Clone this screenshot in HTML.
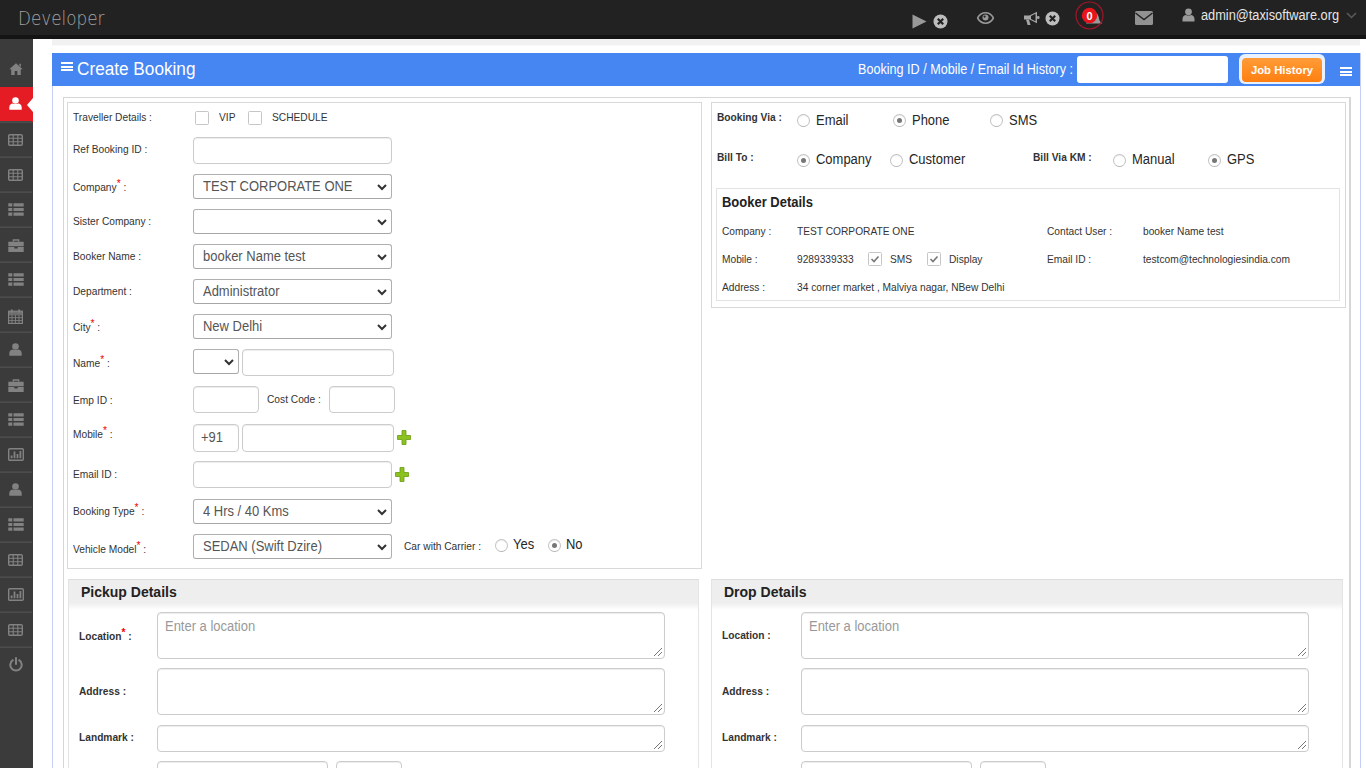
<!DOCTYPE html>
<html><head><meta charset="utf-8"><title>Create Booking</title>
<style>
*{box-sizing:border-box;margin:0;padding:0}
html,body{width:1366px;height:768px;overflow:hidden;background:#fff;font-family:"Liberation Sans",Arial,sans-serif;color:#333}
#top{position:absolute;left:0;top:0;width:1366px;height:39px;background:#222;border-bottom:4px solid #141414}
#top .brand{position:absolute;left:18px;top:6px;font-size:19px;line-height:24px;color:#a4a4a4;font-family:"DejaVu Sans","Liberation Sans",sans-serif;font-weight:200;transform:scaleX(.885);transform-origin:0 0;white-space:nowrap}
#top svg{position:absolute}
#top .mail{position:absolute;left:1201px;top:7px;font-size:14px;line-height:16px;color:#e6e6e6;white-space:nowrap;transform:scaleX(.913);transform-origin:0 0}
#side{position:absolute;left:0;top:39px;width:33px;height:729px;background:#3b3b3b}
#side .it{position:absolute;left:0;width:32px;height:35px;border-top:1px solid #4c4c4c;box-shadow:0 -1px 0 #464646}
#side .it.act{background:#e51c23;border:0;box-shadow:none;width:33px}
#side .it.act:after{content:"";position:absolute;right:0;top:10.500px;border-right:6px solid #fff;border-top:7px solid transparent;border-bottom:7px solid transparent}
#side .it svg{position:absolute}
#strip{position:absolute;left:52px;top:39px;width:1308px;height:7px;background:linear-gradient(#f1f1f1 0,#f1f1f1 6px,#f9f9f9 6px,#f9f9f9 7px)}
#panel{position:absolute;left:52px;top:53px;width:1309px;height:720px;border:1px solid #c5cff5}
#hdr{position:absolute;left:52px;top:53px;width:1308px;height:33px;background:#4586f3}
#hdr .title{position:absolute;left:25px;top:5px;font-size:18px;line-height:22px;color:#fff;white-space:nowrap;transform:scaleX(.955);transform-origin:0 0}
#hdr .hist{position:absolute;left:806px;top:8px;font-size:14px;line-height:16px;color:#fff;white-space:nowrap;transform:scaleX(.9);transform-origin:0 0}
#hdr .srch{position:absolute;left:1025px;top:3px;width:151px;height:27px;background:#fff;border-radius:3px}
#hdr .btn{position:absolute;left:1187px;top:1px;width:86px;height:30px;border-radius:6px;background:#e9f1ff;}
#hdr .btn i{position:absolute;left:3px;top:4px;width:80px;height:24px;border-radius:4px;background:linear-gradient(#ff9c38,#ff7f10);color:#fff;font-style:normal;font-weight:bold;font-size:11.300px;line-height:24px;text-align:center}
.bars{position:absolute;width:12px;height:9px;border-top:2px solid #fff;border-bottom:2px solid #fff}
.bars:after{content:"";position:absolute;left:0;top:1.5px;width:12px;height:2px;background:#fff}
.box{position:absolute;border:1px solid #d9d9d9;background:#fff}
.sbox{position:absolute;border:1px solid #e4e4e4;border-top-color:#dcdcdc;height:200px}
.lbl{position:absolute;font-size:11px;line-height:13px;color:#333;white-space:nowrap;transform:scaleX(.927);transform-origin:0 0}
.lbl b{font-weight:bold}
.req{color:#e00;font-size:11px;position:relative;top:-4px}
.inp{position:absolute;height:27px;border:1px solid #ccc;border-radius:4px;background:#fff;box-shadow:inset 0 1px 1px rgba(0,0,0,.075)}
.sel{position:absolute;height:25px;border:1px solid #b0b0b0;border-bottom-color:#a6a6a6;border-radius:3px;background:#fff;font-size:14px;color:#555;line-height:22px;padding-left:9px;white-space:nowrap}
.sel span{display:inline-block;transform:scaleX(.927);transform-origin:0 0}
.sel svg{position:absolute;right:3.500px;top:7px}
.t14{position:absolute;font-size:14px;line-height:16px;color:#262626;white-space:nowrap;transform:scaleX(.927);transform-origin:0 0}
.t10{position:absolute;font-size:11px;line-height:12px;color:#333;white-space:nowrap;transform:scaleX(.927);transform-origin:0 0}
.sx{display:inline-block;transform:scaleX(.927);transform-origin:0 0}
.radio{position:absolute;width:13px;height:13px;border:1px solid #c2c2c2;border-bottom-color:#b4b4b4;border-radius:50%;background:#fff;box-shadow:inset 0 1px 1px rgba(0,0,0,.06)}
.radio.on:after{content:"";position:absolute;left:3px;top:3px;width:5px;height:5px;border-radius:50%;background:#777}
.chk{position:absolute;width:14px;height:14px;border:1px solid #c6c6c6;border-radius:1.5px;background:#fff}
.ta{position:absolute;border:1px solid #ccc;border-radius:4px;background:#fff;box-shadow:inset 0 1px 1px rgba(0,0,0,.075)}
.ta .ph{position:absolute;left:7px;top:5px;font-size:14px;line-height:16px;color:#999;white-space:nowrap;transform:scaleX(.927);transform-origin:0 0}
.ta svg{position:absolute;right:1px;bottom:1px}
.sech{position:absolute;height:31px;border:1px solid #e4e4e4;border-top-color:#dcdcdc;border-bottom:0;background:linear-gradient(#eee 0,#eee 76%,#fff 100%);font-size:14px;font-weight:bold;color:#222;line-height:24px;padding-left:12px}
.sech span{display:inline-block}
</style></head><body>
<div id="top">
<div class="brand">Developer</div>
<!-- play -->
<svg style="left:912px;top:14px" width="15" height="15" viewBox="0 0 15 15"><path d="M0.5 0.5L14.5 7.5L0.5 14.5Z" fill="#999"/></svg>
<!-- times circle -->
<svg style="left:933px;top:14px" width="15" height="15" viewBox="0 0 15 15"><circle cx="7.5" cy="7.5" r="7" fill="#bdbdbd"/><path d="M4.8 4.8L10.2 10.2M10.2 4.8L4.8 10.2" stroke="#222" stroke-width="2.2"/></svg>
<!-- eye -->
<svg style="left:977px;top:12px" width="17" height="12" viewBox="0 0 17 12"><path d="M0.5 6C3 1.5 6 0.8 8.5 0.8S14 1.5 16.5 6C14 10.5 11 11.2 8.5 11.2S3 10.5 0.5 6Z" fill="none" stroke="#999" stroke-width="1.6"/><circle cx="8.5" cy="5.6" r="3" fill="#999"/><circle cx="7.6" cy="4.6" r="1.1" fill="#222"/></svg>
<!-- bullhorn -->
<svg style="left:1023px;top:11px" width="17" height="15" viewBox="0 0 17 15"><path d="M1 4.5h5.5L14 0.8v11.4L6.5 8.5H1Z" fill="#a5a5a5"/><path d="M3 8.5h3l1.5 5.5H4.6Z" fill="#a5a5a5"/><rect x="14" y="5" width="2.5" height="3" rx="1" fill="#a5a5a5"/><path d="M8 5L12.5 2.8V10.2L8 8Z" fill="#222"/></svg>
<svg style="left:1045px;top:11px" width="15" height="15" viewBox="0 0 15 15"><circle cx="7.5" cy="7.5" r="7" fill="#bdbdbd"/><path d="M4.8 4.8L10.2 10.2M10.2 4.8L4.8 10.2" stroke="#222" stroke-width="2.2"/></svg>
<!-- bell + badge -->
<svg style="left:1074px;top:0px" width="32" height="32" viewBox="0 0 32 32"><path d="M19 12c4 0 5.5 3 6 6.5c0.4 2.5 1.5 3.5 3.5 5H12Z" fill="#9a9a9a"/><circle cx="15.5" cy="15.5" r="13.5" fill="none" stroke="#a3152a" stroke-width="1.2"/><circle cx="15.5" cy="15.5" r="7.7" fill="#e8141c"/><text x="15.5" y="19.6" font-family="Liberation Sans, sans-serif" font-size="11" font-weight="bold" fill="#fff" text-anchor="middle">0</text></svg>
<!-- envelope -->
<svg style="left:1135px;top:11px" width="18" height="14" viewBox="0 0 18 14"><rect x="0" y="0" width="18" height="14" rx="1.6" fill="#929292"/><path d="M0.5 2L9 8.6L17.5 2" fill="none" stroke="#222" stroke-width="1.4"/></svg>
<!-- user -->
<svg style="left:1182px;top:8px" width="13" height="14" viewBox="0 0 13 14"><circle cx="6.5" cy="3.8" r="3.4" fill="#9a9a9a"/><path d="M0.5 13.5V11C0.5 8.3 2.5 7 4 7c1 .8 4 .8 5 0c1.500 0 3.500 1.300 3.500 4v2.500Z" fill="#9a9a9a"/></svg>
<div class="mail">admin@taxisoftware.org</div>
<svg style="left:1346px;top:12px" width="11" height="7" viewBox="0 0 11 7"><path d="M1 1L5.500 5.500L10 1" fill="none" stroke="#5a5a5a" stroke-width="1.5"/></svg>
</div>
<div id="side">
<div class="it" style="top:13px;border:0;box-shadow:none"><svg style="left:8.7px;top:10.7px" width="14" height="12" viewBox="0 0 14 12"><path d="M7 0.300L0.300 6.300h1.900V12h3.500V8h2.600v4h3.500V6.300h1.900Z" fill="#828282"/><path d="M10.300 0.800h1.600v3.200L10.300 2.500Z" fill="#828282"/></svg></div>
<div class="it act" style="top:48px"><svg style="left:9.2px;top:9.9px" width="13" height="13" viewBox="0 0 13 13"><circle cx="6.500" cy="3.500" r="3.300" fill="#fff"/><path d="M0.300 12.800V10.300C0.300 7.700 2.300 6.500 3.800 6.500c1 .8 4.400 .8 5.400 0c1.500 0 3.500 1.200 3.500 3.800v2.500Z" fill="#fff"/></svg></div>
<div class="it" style="top:83px"><svg style="left:8.2px;top:10.7px" width="15" height="12" viewBox="0 0 15 12"><rect x="0.700" y="0.700" width="13.600" height="10.600" rx="1.200" fill="none" stroke="#828282" stroke-width="1.400"/><path d="M1 4.300h13M1 7.700h13M5.200 1v10M9.800 1v10" stroke="#828282" stroke-width="1.100"/></svg></div>
<div class="it" style="top:118px"><svg style="left:8.2px;top:10.7px" width="15" height="12" viewBox="0 0 15 12"><rect x="0.700" y="0.700" width="13.600" height="10.600" rx="1.200" fill="none" stroke="#828282" stroke-width="1.400"/><path d="M1 4.300h13M1 7.700h13M5.200 1v10M9.800 1v10" stroke="#828282" stroke-width="1.100"/></svg></div>
<div class="it" style="top:153px"><svg style="left:7.7px;top:10.1px" width="16" height="13" viewBox="0 0 16 13"><path d="M0.300 0.300h4v3.200h-4ZM5.500 0.300h10.200v3.200H5.500ZM0.300 4.900h4v3.200h-4ZM5.500 4.900h10.200v3.200H5.500ZM0.300 9.500h4v3.200h-4ZM5.500 9.500h10.200v3.200H5.500Z" fill="#828282"/></svg></div>
<div class="it" style="top:188px"><svg style="left:7.7px;top:10.8px" width="16" height="13" viewBox="0 0 16 13"><path d="M5.300 2.800V1h5.400v1.800" fill="none" stroke="#828282" stroke-width="1.300"/><path d="M0.300 2.800h15.400v4.400H0.300ZM0.300 8.100h6v1.300h3.400V8.100h6V13H0.300Z" fill="#828282"/></svg></div>
<div class="it" style="top:223px"><svg style="left:7.7px;top:10.1px" width="16" height="13" viewBox="0 0 16 13"><path d="M0.300 0.300h4v3.200h-4ZM5.500 0.300h10.200v3.200H5.500ZM0.300 4.900h4v3.200h-4ZM5.500 4.900h10.200v3.200H5.500ZM0.300 9.500h4v3.200h-4ZM5.500 9.500h10.200v3.200H5.500Z" fill="#828282"/></svg></div>
<div class="it" style="top:258px"><svg style="left:8.2px;top:10.5px" width="15" height="15" viewBox="0 0 15 15"><rect x="0.600" y="2.200" width="13.800" height="12.200" fill="none" stroke="#828282" stroke-width="1.200"/><path d="M0.600 5.800h13.800M0.600 8.700h13.800M0.600 11.600h13.800M4 5.800v8.600M7.500 5.800v8.600M11 5.800v8.600" stroke="#828282" stroke-width="0.900"/><path d="M3.800 0.400v3.400M11.200 0.400v3.400" stroke="#828282" stroke-width="1.800"/><rect x="0.600" y="2.200" width="13.800" height="3" fill="#828282" opacity=".75"/></svg></div>
<div class="it" style="top:293px"><svg style="left:9.2px;top:9.9px" width="13" height="13" viewBox="0 0 13 13"><circle cx="6.500" cy="3.500" r="3.300" fill="#828282"/><path d="M0.300 12.800V10.300C0.300 7.700 2.300 6.500 3.800 6.500c1 .8 4.400 .8 5.400 0c1.500 0 3.500 1.200 3.500 3.800v2.500Z" fill="#828282"/></svg></div>
<div class="it" style="top:328px"><svg style="left:7.7px;top:10.8px" width="16" height="13" viewBox="0 0 16 13"><path d="M5.300 2.800V1h5.400v1.800" fill="none" stroke="#828282" stroke-width="1.300"/><path d="M0.300 2.800h15.400v4.400H0.300ZM0.300 8.100h6v1.300h3.400V8.100h6V13H0.300Z" fill="#828282"/></svg></div>
<div class="it" style="top:363px"><svg style="left:7.7px;top:10.1px" width="16" height="13" viewBox="0 0 16 13"><path d="M0.300 0.300h4v3.200h-4ZM5.500 0.300h10.200v3.200H5.500ZM0.300 4.900h4v3.200h-4ZM5.500 4.900h10.200v3.200H5.500ZM0.300 9.500h4v3.200h-4ZM5.500 9.500h10.200v3.200H5.500Z" fill="#828282"/></svg></div>
<div class="it" style="top:398px"><svg style="left:7.7px;top:10.2px" width="16" height="13" viewBox="0 0 16 13"><rect x="0.700" y="0.700" width="14.600" height="11.600" rx="1" fill="none" stroke="#828282" stroke-width="1.400"/><path d="M3.600 10.300V7.500M6.500 10.300V3.500M9.500 10.300V6M12.400 10.300V3" stroke="#828282" stroke-width="1.800"/></svg></div>
<div class="it" style="top:433px"><svg style="left:9.2px;top:9.9px" width="13" height="13" viewBox="0 0 13 13"><circle cx="6.500" cy="3.500" r="3.300" fill="#828282"/><path d="M0.300 12.800V10.300C0.300 7.700 2.300 6.500 3.800 6.500c1 .8 4.400 .8 5.400 0c1.500 0 3.500 1.200 3.500 3.800v2.500Z" fill="#828282"/></svg></div>
<div class="it" style="top:468px"><svg style="left:7.7px;top:10.1px" width="16" height="13" viewBox="0 0 16 13"><path d="M0.300 0.300h4v3.200h-4ZM5.500 0.300h10.200v3.200H5.500ZM0.300 4.900h4v3.200h-4ZM5.500 4.900h10.200v3.200H5.500ZM0.300 9.500h4v3.200h-4ZM5.500 9.500h10.200v3.200H5.500Z" fill="#828282"/></svg></div>
<div class="it" style="top:503px"><svg style="left:8.2px;top:10.7px" width="15" height="12" viewBox="0 0 15 12"><rect x="0.700" y="0.700" width="13.600" height="10.600" rx="1.200" fill="none" stroke="#828282" stroke-width="1.400"/><path d="M1 4.300h13M1 7.700h13M5.200 1v10M9.800 1v10" stroke="#828282" stroke-width="1.100"/></svg></div>
<div class="it" style="top:538px"><svg style="left:7.7px;top:10.2px" width="16" height="13" viewBox="0 0 16 13"><rect x="0.700" y="0.700" width="14.600" height="11.600" rx="1" fill="none" stroke="#828282" stroke-width="1.400"/><path d="M3.600 10.300V7.500M6.500 10.300V3.500M9.500 10.300V6M12.400 10.300V3" stroke="#828282" stroke-width="1.800"/></svg></div>
<div class="it" style="top:573px"><svg style="left:8.2px;top:10.7px" width="15" height="12" viewBox="0 0 15 12"><rect x="0.700" y="0.700" width="13.600" height="10.600" rx="1.200" fill="none" stroke="#828282" stroke-width="1.400"/><path d="M1 4.300h13M1 7.700h13M5.200 1v10M9.800 1v10" stroke="#828282" stroke-width="1.100"/></svg></div>
<div class="it" style="top:608px"><svg style="left:8.7px;top:9.0px" width="14" height="15" viewBox="0 0 14 15"><path d="M3.800 3.200A5.700 5.700 0 1 0 10.200 3.200" fill="none" stroke="#828282" stroke-width="2" stroke-linecap="round"/><path d="M7 1V7" stroke="#828282" stroke-width="2" stroke-linecap="round"/></svg></div>
</div>
<div id="strip"></div>
<div id="panel"></div>
<div id="hdr">
<div class="bars" style="left:9px;top:9px"></div>
<div class="title">Create Booking</div>
<div class="hist">Booking ID / Mobile / Email Id History :</div>
<div class="srch"></div>
<div class="btn"><i>Job History</i></div>
<div class="bars" style="left:1288px;top:14px"></div>
</div>
<div id="content">
<!-- outer box -->
<div class="box" style="left:63px;top:97px;width:1288px;height:700px;border-color:#d6d6d6;border-right:2px solid #d6d6d6"></div>
<!-- left box -->
<div class="box" style="left:67px;top:102px;width:635px;height:467px"></div>
<!-- right box -->
<div class="box" style="left:711px;top:102px;width:635px;height:206px"></div>

<!-- LEFT FORM -->
<div class="lbl" style="left:73px;top:111px">Traveller Details :</div>
<div class="chk" style="left:195px;top:111px"></div><div class="lbl" style="left:219px;top:111px">VIP</div>
<div class="chk" style="left:248px;top:111px"></div><div class="lbl" style="left:272px;top:111px">SCHEDULE</div>

<div class="lbl" style="left:73px;top:143px">Ref Booking ID :</div>
<div class="inp" style="left:193px;top:137px;width:199px"></div>

<div class="lbl" style="left:73px;top:181px">Company<span class="req">*</span> :</div>
<div class="sel" style="left:193px;top:174px;width:199px"><span>TEST CORPORATE ONE</span><svg width="12" height="10" viewBox="0 0 12 10"><path d="M2 3 L6 7 L10 3" fill="none" stroke="#333" stroke-width="2"/></svg></div>

<div class="lbl" style="left:73px;top:215px">Sister Company :</div>
<div class="sel" style="left:193px;top:209px;width:199px"><svg width="12" height="10" viewBox="0 0 12 10"><path d="M2 3 L6 7 L10 3" fill="none" stroke="#333" stroke-width="2"/></svg></div>

<div class="lbl" style="left:73px;top:250px">Booker Name :</div>
<div class="sel" style="left:193px;top:244px;width:199px"><span>booker Name test</span><svg width="12" height="10" viewBox="0 0 12 10"><path d="M2 3 L6 7 L10 3" fill="none" stroke="#333" stroke-width="2"/></svg></div>

<div class="lbl" style="left:73px;top:285px">Department :</div>
<div class="sel" style="left:193px;top:279px;width:199px"><span>Administrator</span><svg width="12" height="10" viewBox="0 0 12 10"><path d="M2 3 L6 7 L10 3" fill="none" stroke="#333" stroke-width="2"/></svg></div>

<div class="lbl" style="left:73px;top:321px">City<span class="req">*</span> :</div>
<div class="sel" style="left:193px;top:314px;width:199px"><span>New Delhi</span><svg width="12" height="10" viewBox="0 0 12 10"><path d="M2 3 L6 7 L10 3" fill="none" stroke="#333" stroke-width="2"/></svg></div>

<div class="lbl" style="left:73px;top:357px">Name<span class="req">*</span> :</div>
<div class="sel" style="left:193px;top:349px;width:46px"><svg width="12" height="10" viewBox="0 0 12 10"><path d="M2 3 L6 7 L10 3" fill="none" stroke="#333" stroke-width="2"/></svg></div>
<div class="inp" style="left:242px;top:349px;width:152px"></div>

<div class="lbl" style="left:73px;top:394px">Emp ID :</div>
<div class="inp" style="left:193px;top:386px;width:66px"></div>
<div class="lbl" style="left:267px;top:393px">Cost Code :</div>
<div class="inp" style="left:329px;top:386px;width:66px"></div>

<div class="lbl" style="left:73px;top:428px">Mobile<span class="req">*</span> :</div>
<div class="inp" style="left:193px;top:424px;width:46px;height:28px;font-size:14px;color:#555;line-height:25px;padding-left:7px"><span class="sx">+91</span></div>
<div class="inp" style="left:242px;top:424px;width:152px;height:28px"></div>
<svg class="plus" style="position:absolute;left:397px;top:430px" width="14" height="15" viewBox="0 0 14 15"><path d="M5 0.5h4v5h4.5v4H9v5H5v-5H0.5v-4H5z" fill="#8bc220" stroke="#6a9a12" stroke-width="0.8"/></svg>

<div class="lbl" style="left:73px;top:468px">Email ID :</div>
<div class="inp" style="left:193px;top:461px;width:199px"></div>
<svg class="plus" style="position:absolute;left:395px;top:467px" width="14" height="15" viewBox="0 0 14 15"><path d="M5 0.5h4v5h4.5v4H9v5H5v-5H0.5v-4H5z" fill="#8bc220" stroke="#6a9a12" stroke-width="0.8"/></svg>

<div class="lbl" style="left:73px;top:505px">Booking Type<span class="req">*</span> :</div>
<div class="sel" style="left:193px;top:499px;width:199px"><span>4 Hrs / 40 Kms</span><svg width="12" height="10" viewBox="0 0 12 10"><path d="M2 3 L6 7 L10 3" fill="none" stroke="#333" stroke-width="2"/></svg></div>

<div class="lbl" style="left:73px;top:543px">Vehicle Model<span class="req">*</span> :</div>
<div class="sel" style="left:193px;top:534px;width:199px"><span>SEDAN (Swift Dzire)</span><svg width="12" height="10" viewBox="0 0 12 10"><path d="M2 3 L6 7 L10 3" fill="none" stroke="#333" stroke-width="2"/></svg></div>
<div class="t10" style="left:404px;top:540px">Car with Carrier :</div>
<div class="radio" style="left:495px;top:539px"></div><div class="t14" style="left:513px;top:536px">Yes</div>
<div class="radio on" style="left:548px;top:539px"></div><div class="t14" style="left:566px;top:536px">No</div>

<!-- RIGHT TOP -->
<div class="lbl" style="left:717px;top:111px"><b>Booking Via :</b></div>
<div class="radio" style="left:797px;top:114px"></div><div class="t14" style="left:816px;top:112px">Email</div>
<div class="radio on" style="left:893px;top:114px"></div><div class="t14" style="left:912px;top:112px">Phone</div>
<div class="radio" style="left:990px;top:114px"></div><div class="t14" style="left:1009px;top:112px">SMS</div>

<div class="lbl" style="left:717px;top:151px"><b>Bill To :</b></div>
<div class="radio on" style="left:797px;top:154px"></div><div class="t14" style="left:816px;top:151px">Company</div>
<div class="radio" style="left:890px;top:154px"></div><div class="t14" style="left:909px;top:151px">Customer</div>
<div class="lbl" style="left:1033px;top:151px"><b>Bill Via KM :</b></div>
<div class="radio" style="left:1113px;top:154px"></div><div class="t14" style="left:1132px;top:151px">Manual</div>
<div class="radio on" style="left:1208px;top:154px"></div><div class="t14" style="left:1227px;top:151px">GPS</div>

<div class="box" style="left:716px;top:188px;width:624px;height:113px;border-color:#e3e3e3"></div>
<div class="t14" style="left:722px;top:194px;font-weight:bold;color:#222">Booker Details</div>
<div class="t10" style="left:722px;top:225px">Company :</div><div class="t10" style="left:797px;top:225px">TEST CORPORATE ONE</div>
<div class="t10" style="left:1047px;top:225px">Contact User :</div><div class="t10" style="left:1143px;top:225px">booker Name test</div>
<div class="t10" style="left:722px;top:253px">Mobile :</div><div class="t10" style="left:797px;top:253px">9289339333</div>
<div class="chk ck" style="left:868px;top:252px"><svg width="12" height="12" viewBox="0 0 12 12" style="position:absolute;left:0;top:0"><path d="M2.500 6L5 8.500L9.500 3.500" fill="none" stroke="#777" stroke-width="1.600"/></svg></div><div class="t10" style="left:890px;top:253px">SMS</div>
<div class="chk ck" style="left:927px;top:252px"><svg width="12" height="12" viewBox="0 0 12 12" style="position:absolute;left:0;top:0"><path d="M2.500 6L5 8.500L9.500 3.500" fill="none" stroke="#777" stroke-width="1.600"/></svg></div><div class="t10" style="left:949px;top:253px">Display</div>
<div class="t10" style="left:1047px;top:253px">Email ID :</div><div class="t10" style="left:1143px;top:253px">testcom@technologiesindia.com</div>
<div class="t10" style="left:722px;top:281px">Address :</div><div class="t10" style="left:797px;top:281px">34 corner market , Malviya nagar, NBew Delhi</div>

<!-- PICKUP -->
<div class="sbox" style="left:68px;top:579px;width:631px"></div>
<div class="sech" style="left:68px;top:579px;width:631px"><span>Pickup Details</span></div>
<div class="lbl" style="left:79px;top:630px"><b>Location<span class="req">*</span> :</b></div>
<div class="ta" style="left:157px;top:612px;width:508px;height:47px"><span class="ph">Enter a location</span><svg width="10" height="10" viewBox="0 0 10 10"><path d="M9 1L1 9M9 5L5 9" stroke="#777" stroke-width="1"/></svg></div>
<div class="lbl" style="left:79px;top:685px"><b>Address :</b></div>
<div class="ta" style="left:157px;top:668px;width:508px;height:47px"><svg width="10" height="10" viewBox="0 0 10 10"><path d="M9 1L1 9M9 5L5 9" stroke="#777" stroke-width="1"/></svg></div>
<div class="lbl" style="left:79px;top:731px"><b>Landmark :</b></div>
<div class="ta" style="left:157px;top:725px;width:508px;height:27px"><svg width="10" height="10" viewBox="0 0 10 10"><path d="M9 1L1 9M9 5L5 9" stroke="#777" stroke-width="1"/></svg></div>
<div class="inp" style="left:157px;top:761px;width:171px"></div>
<div class="inp" style="left:336px;top:761px;width:66px"></div>

<!-- DROP -->
<div class="sbox" style="left:711px;top:579px;width:632px"></div>
<div class="sech" style="left:711px;top:579px;width:632px"><span>Drop Details</span></div>
<div class="lbl" style="left:722px;top:629px"><b>Location :</b></div>
<div class="ta" style="left:801px;top:612px;width:508px;height:47px"><span class="ph">Enter a location</span><svg width="10" height="10" viewBox="0 0 10 10"><path d="M9 1L1 9M9 5L5 9" stroke="#777" stroke-width="1"/></svg></div>
<div class="lbl" style="left:722px;top:685px"><b>Address :</b></div>
<div class="ta" style="left:801px;top:668px;width:508px;height:47px"><svg width="10" height="10" viewBox="0 0 10 10"><path d="M9 1L1 9M9 5L5 9" stroke="#777" stroke-width="1"/></svg></div>
<div class="lbl" style="left:722px;top:731px"><b>Landmark :</b></div>
<div class="ta" style="left:801px;top:725px;width:508px;height:27px"><svg width="10" height="10" viewBox="0 0 10 10"><path d="M9 1L1 9M9 5L5 9" stroke="#777" stroke-width="1"/></svg></div>
<div class="inp" style="left:801px;top:761px;width:171px"></div>
<div class="inp" style="left:980px;top:761px;width:66px"></div>
</div>
</body></html>
